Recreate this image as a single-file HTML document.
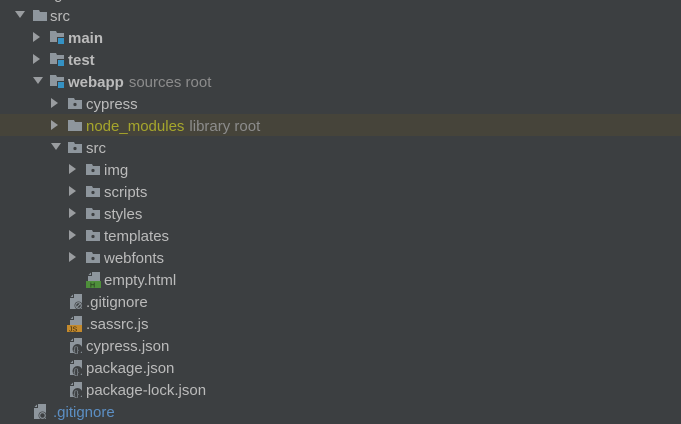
<!DOCTYPE html>
<html><head><meta charset="utf-8"><style>
html,body{margin:0;padding:0}
body{width:681px;height:415px;overflow:hidden;background:#3c3f41;position:relative;font-family:"Liberation Sans",sans-serif;font-size:15px;color:#bbbbbb}
.r{position:absolute;left:0;width:681px;height:22px;line-height:22px}
.r svg{position:absolute}
.t{position:absolute;top:2px;white-space:nowrap}
.b{font-weight:bold}
.g{color:#8c8c8c;margin-left:5px}
.hl{background:#46443a}
</style></head><body>
<svg width="0" height="0" style="position:absolute">
<defs>
<symbol id="down" viewBox="0 0 10 8"><path d="M0 0H10L5 7Z" fill="#9a9da0"/></symbol>
<symbol id="right" viewBox="0 0 8 10"><path d="M0 0V10L7 5Z" fill="#9a9da0"/></symbol>
<symbol id="fold" viewBox="0 0 14 11"><path d="M0 0H6L7 2H14V11H0Z" fill="#8e969d"/></symbol>
<symbol id="foldd" viewBox="0 0 14 11"><path d="M0 0H6L7 2H14V11H0Z" fill="#8e969d"/><circle cx="7" cy="6.5" r="1.6" fill="#3c3f41"/></symbol>
<symbol id="folds" viewBox="0 0 14 13"><path d="M0 0H6L7 2H14V11H0Z" fill="#8e969d"/><rect x="7" y="6" width="7" height="7" fill="#3c3f41"/><rect x="8" y="7" width="6" height="6" fill="#3592c4"/></symbol>
<symbol id="file" viewBox="0 0 12 15"><path d="M4 0H12V15H0V4Z" fill="#8e969d"/><path d="M0 3.5L3.5 0V3.5Z" fill="#8e969d"/><path d="M0 3.5H3.5V0" stroke="#3c3f41" fill="none"/></symbol>
</defs></svg>

<div class="r" style="top:-18px"><span class="t" style="left:50px">.git</span></div>

<div class="r" style="top:4px"><svg style="left:15px;top:7px" width="10" height="8"><use href="#down"/></svg><svg style="left:33px;top:6px" width="14" height="11"><use href="#fold"/></svg><span class="t" style="left:50px">src</span></div>

<div class="r" style="top:26px"><svg style="left:33px;top:6px" width="8" height="10"><use href="#right"/></svg><svg style="left:50px;top:5px" width="14" height="13"><use href="#folds"/></svg><span class="t b" style="left:68px">main</span></div>

<div class="r" style="top:48px"><svg style="left:33px;top:6px" width="8" height="10"><use href="#right"/></svg><svg style="left:50px;top:5px" width="14" height="13"><use href="#folds"/></svg><span class="t b" style="left:68px">test</span></div>

<div class="r" style="top:70px"><svg style="left:33px;top:7px" width="10" height="8"><use href="#down"/></svg><svg style="left:50px;top:5px" width="14" height="13"><use href="#folds"/></svg><span class="t" style="left:68px"><b>webapp</b><span class="g">sources root</span></span></div>

<div class="r" style="top:92px"><svg style="left:51px;top:6px" width="8" height="10"><use href="#right"/></svg><svg style="left:68px;top:6px" width="14" height="11"><use href="#foldd"/></svg><span class="t" style="left:86px">cypress</span></div>

<div class="r hl" style="top:114px"><svg style="left:51px;top:6px" width="8" height="10"><use href="#right"/></svg><svg style="left:68px;top:6px" width="14" height="11"><use href="#fold"/></svg><span class="t" style="left:86px"><span style="color:#a6a62c">node_modules</span><span class="g">library root</span></span></div>

<div class="r" style="top:136px"><svg style="left:51px;top:7px" width="10" height="8"><use href="#down"/></svg><svg style="left:68px;top:6px" width="14" height="11"><use href="#foldd"/></svg><span class="t" style="left:86px">src</span></div>

<div class="r" style="top:158px"><svg style="left:69px;top:6px" width="8" height="10"><use href="#right"/></svg><svg style="left:86px;top:6px" width="14" height="11"><use href="#foldd"/></svg><span class="t" style="left:104px">img</span></div>
<div class="r" style="top:180px"><svg style="left:69px;top:6px" width="8" height="10"><use href="#right"/></svg><svg style="left:86px;top:6px" width="14" height="11"><use href="#foldd"/></svg><span class="t" style="left:104px">scripts</span></div>
<div class="r" style="top:202px"><svg style="left:69px;top:6px" width="8" height="10"><use href="#right"/></svg><svg style="left:86px;top:6px" width="14" height="11"><use href="#foldd"/></svg><span class="t" style="left:104px">styles</span></div>
<div class="r" style="top:224px"><svg style="left:69px;top:6px" width="8" height="10"><use href="#right"/></svg><svg style="left:86px;top:6px" width="14" height="11"><use href="#foldd"/></svg><span class="t" style="left:104px">templates</span></div>
<div class="r" style="top:246px"><svg style="left:69px;top:6px" width="8" height="10"><use href="#right"/></svg><svg style="left:86px;top:6px" width="14" height="11"><use href="#foldd"/></svg><span class="t" style="left:104px">webfonts</span></div>

<div class="r" style="top:268px"><svg style="left:88px;top:4px" width="12" height="15"><use href="#file"/></svg><svg style="left:86px;top:13px" width="15" height="7"><rect width="15" height="7" fill="#4e8f3a"/><text x="4" y="6.5" font-size="7" fill="#1f2a1a" font-family="Liberation Sans">H</text></svg><span class="t" style="left:104px">empty.html</span></div>

<div class="r" style="top:290px"><svg style="left:70px;top:4px" width="12" height="15"><use href="#file"/></svg><svg style="left:74px;top:11px" width="9" height="9"><circle cx="4.5" cy="4.5" r="4" fill="#3c3f41"/><circle cx="4.5" cy="4.5" r="2.8" fill="none" stroke="#8e969d" stroke-width="1.1"/><path d="M2.5 6.5L6.5 2.5" stroke="#8e969d" stroke-width="1.1"/></svg><span class="t" style="left:86px">.gitignore</span></div>

<div class="r" style="top:312px"><svg style="left:70px;top:4px" width="12" height="15"><use href="#file"/></svg><svg style="left:67px;top:13px" width="15" height="7"><rect width="15" height="7" fill="#c48a2c"/><text x="2" y="6.5" font-size="7" fill="#3a2a10" font-family="Liberation Sans">JS</text></svg><span class="t" style="left:86px">.sassrc.js</span></div>

<div class="r" style="top:334px"><svg style="left:70px;top:4px" width="12" height="15"><use href="#file"/></svg><svg style="left:72px;top:10px" width="11" height="10"><circle cx="5.5" cy="5" r="5" fill="#3c3f41"/><text x="1.5" y="8.5" font-size="8" fill="#8e969d" font-family="Liberation Sans">{}</text></svg><span class="t" style="left:86px">cypress.json</span></div>
<div class="r" style="top:356px"><svg style="left:70px;top:4px" width="12" height="15"><use href="#file"/></svg><svg style="left:72px;top:10px" width="11" height="10"><circle cx="5.5" cy="5" r="5" fill="#3c3f41"/><text x="1.5" y="8.5" font-size="8" fill="#8e969d" font-family="Liberation Sans">{}</text></svg><span class="t" style="left:86px">package.json</span></div>
<div class="r" style="top:378px"><svg style="left:70px;top:4px" width="12" height="15"><use href="#file"/></svg><svg style="left:72px;top:10px" width="11" height="10"><circle cx="5.5" cy="5" r="5" fill="#3c3f41"/><text x="1.5" y="8.5" font-size="8" fill="#8e969d" font-family="Liberation Sans">{}</text></svg><span class="t" style="left:86px">package-lock.json</span></div>

<div class="r" style="top:400px"><svg style="left:34px;top:4px" width="12" height="15"><use href="#file"/></svg><svg style="left:38px;top:11px" width="9" height="9"><circle cx="4.5" cy="4.5" r="4" fill="#3c3f41"/><circle cx="4.5" cy="4.5" r="2.8" fill="none" stroke="#8e969d" stroke-width="1.1"/></svg><span class="t" style="left:53px;color:#5c8fc4">.gitignore</span></div>
</body></html>
